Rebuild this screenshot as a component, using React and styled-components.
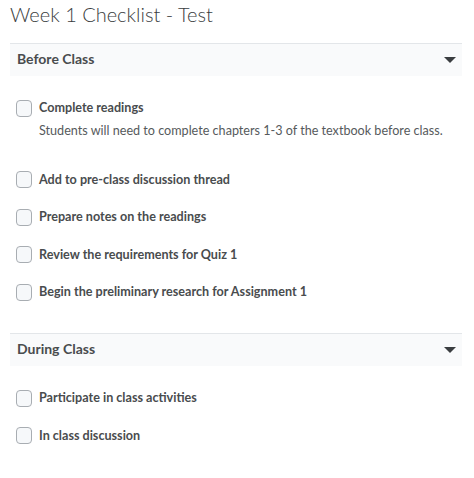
import React from 'react'
import styled, { createGlobalStyle } from 'styled-components'

const GlobalStyle = createGlobalStyle`
    html, body {
        margin: 0;
        padding: 0;
        background: #ffffff;
    }
    body {
        font-family: Lato, "Open Sans", sans-serif;
        color: #494c4e;
    }
`

const Page = styled.div`
    width: 474px;
    padding: 0 12px 0 10px;
    box-sizing: border-box;
`

const Title = styled.h1`
    margin: 0;
    padding-top: 0;
    font-size: 20px;
    font-weight: 300;
    line-height: 28px;
    color: #3a3d40;
    height: 31px;
`

const Section = styled.section`
    margin-top: ${p => p.$first ? '12px' : '30px'};
`

const Header = styled.div`
    display: flex;
    align-items: center;
    justify-content: space-between;
    height: 33px;
    padding: 0 6px 4px 7px;
    box-sizing: border-box;
    background: #f9fafb;
    border-top: 1px solid #e3e6e9;

    h2 {
        margin: 0;
        font-size: 14px;
        font-weight: 700;
        color: #494c4e;
    }
`

const Caret = styled.span`
    width: 0;
    height: 0;
    border-left: 6.5px solid transparent;
    border-right: 6.5px solid transparent;
    border-top: 6px solid #3a3d40;
    margin-top: 3px;
`

const List = styled.ul`
    list-style: none;
    margin: 0;
    padding: 21px 0 0 6px;
    display: flex;
    flex-direction: column;
    gap: 15.5px;
`

const Item = styled.li`
    display: flex;
    flex-direction: column;
    gap: 3px;
`

const Row = styled.label`
    display: flex;
    align-items: center;
    gap: 7px;
    font-size: 12.6px;
    font-weight: 700;
    line-height: 22px;
    color: #494c4e;
`

const Box = styled.span`
    width: 14px;
    height: 15px;
    border: 1px solid #a8adb2;
    border-radius: 4px;
    background: #f6f8fa;
    flex: none;
`

const Description = styled.p`
    margin: 0 0 13px 23px;
    font-size: 12.6px;
    line-height: 18px;
    color: #565a5c;
`

const sections = [
    {
        title: 'Before Class',
        items: [
            { label: 'Complete readings', desc: 'Students will need to complete chapters 1-3 of the textbook before class.' },
            { label: 'Add to pre-class discussion thread' },
            { label: 'Prepare notes on the readings' },
            { label: 'Review the requirements for Quiz 1' },
            { label: 'Begin the preliminary research for Assignment 1' },
        ],
    },
    {
        title: 'During Class',
        items: [
            { label: 'Participate in class activities' },
            { label: 'In class discussion' },
        ],
    },
]

function App() {
    return (
        <Page>
            <GlobalStyle />
            <Title>Week 1 Checklist - Test</Title>
            {
                sections.map((section, index) => (
                    <Section key={section.title} $first={index === 0}>
                        <Header>
                            <h2>{section.title}</h2>
                            <Caret />
                        </Header>
                        <List>
                            {
                                section.items.map(item => (
                                    <Item key={item.label}>
                                        <Row>
                                            <Box />
                                            {item.label}
                                        </Row>
                                        {item.desc ? <Description>{item.desc}</Description> : ''}
                                    </Item>
                                ))
                            }
                        </List>
                    </Section>
                ))
            }
        </Page>
    )
}

export default App
